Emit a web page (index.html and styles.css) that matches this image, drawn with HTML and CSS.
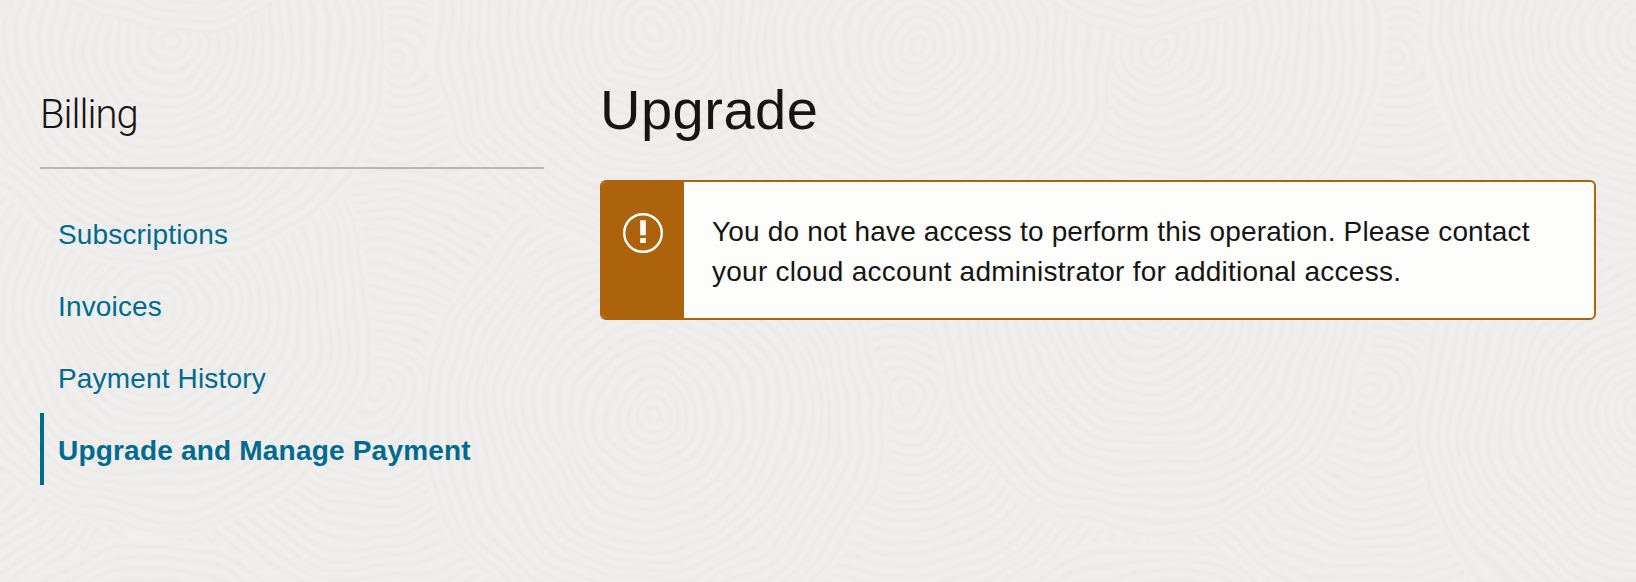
FILE: index.html
```
<!DOCTYPE html>
<html lang="en">
<head>
<meta charset="utf-8">
<title>Billing - Upgrade</title>
<link rel="stylesheet" href="styles.css">
</head>
<body>
<svg class="texture" viewBox="0 0 1636 582" preserveAspectRatio="xMidYMid slice" aria-hidden="true">
  <defs>
    <filter id="hand-drawn" filterUnits="userSpaceOnUse" x="-40" y="-40" width="1716" height="662">
      <feTurbulence type="fractalNoise" baseFrequency="0.012" numOctaves="2" seed="4" result="noise"/>
      <feDisplacementMap in="SourceGraphic" in2="noise" scale="26" xChannelSelector="R" yChannelSelector="G"/>
      <feGaussianBlur stdDeviation="0.9"/>
    </filter>
  </defs>
  <g class="discs" filter="url(#hand-drawn)"></g>
</svg>
<div class="page">
  <aside class="sidebar">
    <h2 class="sidebar-title">Billing</h2>
    <nav class="nav">
      <a class="nav-link" href="#">Subscriptions</a>
      <a class="nav-link" href="#">Invoices</a>
      <a class="nav-link" href="#">Payment History</a>
      <a class="nav-link nav-link-active" href="#">Upgrade and Manage Payment</a>
    </nav>
  </aside>
  <main class="content">
    <h1 class="title">Upgrade</h1>
    <div class="alert" role="alert">
      <div class="alert-side">
        <svg class="alert-icon" viewBox="0 0 40 40" aria-hidden="true">
          <circle cx="20" cy="20" r="18.8" fill="none" stroke="#fff" stroke-width="2.4"/>
          <path d="M17.2 7.3h5.6v14.9h-5.6zM17.2 25h5.6v5h-5.6z" fill="#fff"/>
        </svg>
      </div>
      <p class="alert-text"><span class="alert-line">You do not have access to perform this operation. Please contact</span><br>your cloud account administrator for additional access.</p>
    </div>
  </main>
</div>
<script src="texture.js"></script>
</body>
</html>
```
FILE: styles.css
```
* { box-sizing: border-box; }
body {
  margin: 0;
  min-height: 582px;
  overflow: hidden;
  background: #f0efed;
  color: #161513;
  font-family: "Liberation Sans", Arial, sans-serif;
}
.texture {
  position: absolute;
  inset: 0;
  width: 100%;
  height: 100%;
  z-index: -1;
}
.discs { color-interpolation-filters: sRGB; }
.disc { fill: #f0efed; }
.ring { fill: none; stroke: #ebeae8; stroke-width: 4.5; }
.page {
  display: grid;
  grid-template-columns: 504px 996px;
  column-gap: 56px;
  padding: 84px 40px 0;
}
.sidebar-title {
  margin: 0;
  height: 85px;
  padding-top: 8px;
  border-bottom: 2px solid #bcb6b1;
  font: 300 40px/46px Roboto, "Liberation Sans", sans-serif;
  letter-spacing: -1px;
}
.nav {
  display: flex;
  flex-direction: column;
  padding-top: 28px;
}
.nav-link {
  height: 72px;
  padding-left: 14px;
  border-left: 4px solid transparent;
  color: #006b8f;
  font-size: 28px;
  line-height: 75px;
  letter-spacing: 0.16px;
  text-decoration: none;
  white-space: nowrap;
}
.nav-link-active {
  border-left-color: #006b8f;
  font-weight: 700;
  letter-spacing: 0.2px;
}
.title {
  margin: 0 0 32px;
  height: 64px;
  font-size: 56px;
  font-weight: 400;
  line-height: 52px;
  letter-spacing: 0.5px;
}
.alert {
  display: flex;
  height: 140px;
  overflow: hidden;
  border: 2px solid #ac630c;
  border-radius: 6px;
  background: #fdfdfc;
}
.alert-side {
  flex: none;
  width: 82px;
  padding: 31px 0 0 21px;
  background: #ac630c;
}
.alert-icon { display: block; width: 40px; height: 40px; }
.alert-text {
  margin: 0;
  padding: 30px 0 0 28px;
  font-size: 28px;
  line-height: 40px;
  letter-spacing: 0.25px;
  white-space: nowrap;
}
.alert-line { letter-spacing: 0.17px; }
```
FILE: texture.js
```
// Overlapping concentric ring texture; later discs cover earlier ones.
const discs = [
  [-90, 760, 310], [375, 760, 310], [905, 760, 310], [1370, 760, 310],
  [-90, 60, 260], [400, 60, 260], [1395, 60, 260],
  [-90, 400, 230], [905, 400, 300], [370, 395, 232], [1370, 395, 232],
  [155, 312, 224], [1150, 312, 224],
  [652, 415, 235], [1647, 415, 235],
  [155, 745, 206], [1150, 745, 206],
  [652, 30, 228], [1647, 30, 228],
  [165, 45, 225], [1160, 45, 225],
  [913, 45, 200],
  [175, -165, 200], [1150, -165, 200]
];
const group = document.querySelector(".discs");
function circle(x, y, r, name) {
  const el = document.createElementNS("http://www.w3.org/2000/svg", "circle");
  el.setAttribute("cx", x);
  el.setAttribute("cy", y);
  el.setAttribute("r", r);
  el.setAttribute("class", name);
  group.appendChild(el);
}
for (const [x, y, size] of discs) {
  circle(x, y, size, "disc");
  for (let r = 8; r < size; r += 10.5) circle(x, y, r, "ring");
}
```
